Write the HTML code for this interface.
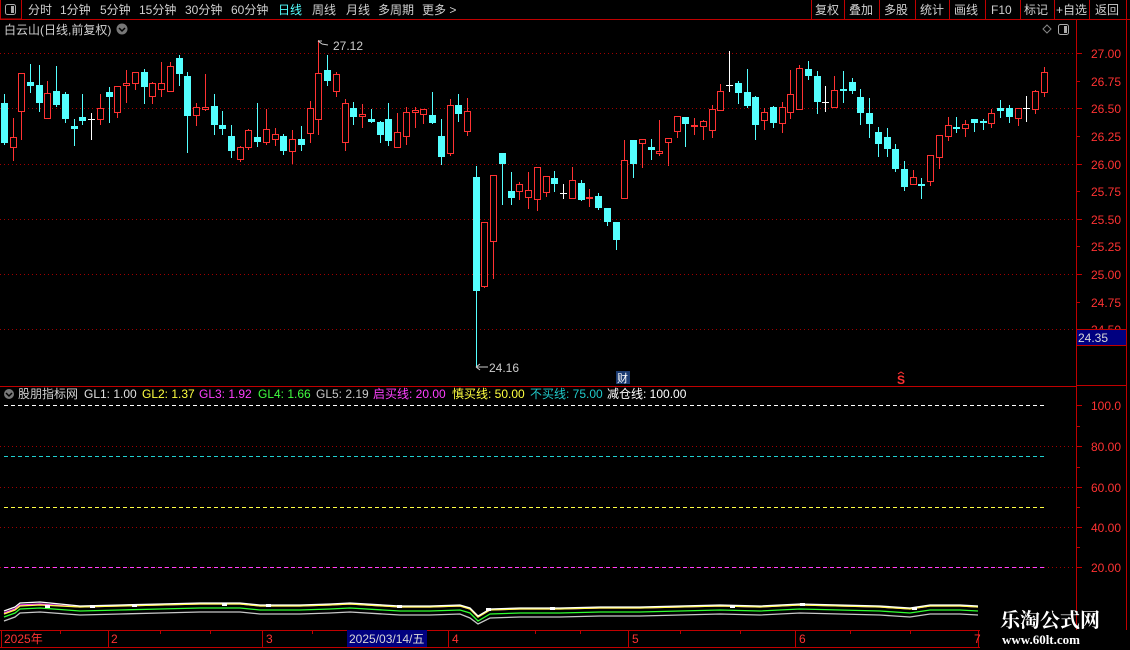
<!DOCTYPE html>
<html><head><meta charset="utf-8"><style>
body{margin:0;background:#000;width:1130px;height:650px;overflow:hidden;font-family:"Liberation Sans","Noto Sans CJK SC",sans-serif;}
svg{position:absolute;left:0;top:0}
</style></head><body>
<svg width="1130" height="650" xmlns="http://www.w3.org/2000/svg" font-family="Liberation Sans, Noto Sans CJK SC, sans-serif">
<rect width="1130" height="650" fill="#000"/>
<!-- toolbar -->
<line x1="0" y1="19.5" x2="1130" y2="19.5" stroke="#c00000"/>
<rect x="0.5" y="-1" width="21" height="20" fill="none" stroke="#c00000"/>
<rect x="5.5" y="4.5" width="10" height="10" rx="2" fill="none" stroke="#aaa"/><rect x="11" y="6" width="3" height="7" fill="#aaa"/>
<g font-size="12" fill="#d0d0d0">
<text x="28" y="14">分时</text><text x="60" y="14">1分钟</text><text x="100" y="14">5分钟</text><text x="139" y="14">15分钟</text><text x="185" y="14">30分钟</text><text x="231" y="14">60分钟</text>
<text x="278" y="14" fill="#54ffff">日线</text><text x="312" y="14">周线</text><text x="346" y="14">月线</text><text x="378" y="14">多周期</text><text x="422" y="14">更多 &gt;</text>
</g>
<g stroke="#c00000" fill="none">
<line x1="811.5" y1="0" x2="811.5" y2="19"/><line x1="844.5" y1="0" x2="844.5" y2="19"/><line x1="879.5" y1="0" x2="879.5" y2="19"/><line x1="915.5" y1="0" x2="915.5" y2="19"/><line x1="949.5" y1="0" x2="949.5" y2="19"/><line x1="985.5" y1="0" x2="985.5" y2="19"/><line x1="1020.5" y1="0" x2="1020.5" y2="19"/><line x1="1054.5" y1="0" x2="1054.5" y2="19"/><line x1="1089.5" y1="0" x2="1089.5" y2="19"/><line x1="1126.5" y1="0" x2="1126.5" y2="19"/>
</g>
<g font-size="12" fill="#d0d0d0">
<text x="815" y="14">复权</text><text x="849" y="14">叠加</text><text x="884" y="14">多股</text><text x="920" y="14">统计</text><text x="954" y="14">画线</text><text x="991" y="14">F10</text><text x="1024" y="14">标记</text><text x="1056" y="14">+自选</text><text x="1095" y="14">返回</text>
</g>
<!-- title -->
<text x="4" y="34" font-size="12" fill="#d0d0d0">白云山(日线,前复权)</text>
<circle cx="122" cy="29" r="5.5" fill="#777"/><path d="M119 28l3 3 3-3" stroke="#000" stroke-width="1.5" fill="none"/>
<path d="M1047 25l4 4-4 4-4-4z" fill="none" stroke="#888"/>
<rect x="1058.5" y="24.5" width="10" height="10" rx="2" fill="none" stroke="#aaa"/><rect x="1064" y="26" width="3" height="7" fill="#aaa"/>
<!-- axes -->
<line x1="1076.5" y1="19" x2="1076.5" y2="630" stroke="#c00000"/>
<line x1="1126.5" y1="19" x2="1126.5" y2="630" stroke="#c00000"/>
<line x1="0" y1="386.5" x2="1076" y2="386.5" stroke="#c00000"/>
<line x1="1076" y1="385.5" x2="1126" y2="385.5" stroke="#c00000"/>
<g stroke="#a00000" stroke-dasharray="1,3">
<line x1="0" y1="53.5" x2="1076" y2="53.5"/><line x1="0" y1="108.5" x2="1076" y2="108.5"/><line x1="0" y1="164.5" x2="1076" y2="164.5"/><line x1="0" y1="219.5" x2="1076" y2="219.5"/><line x1="0" y1="274.5" x2="1076" y2="274.5"/><line x1="0" y1="329.5" x2="1076" y2="329.5"/>
<line x1="0" y1="446.5" x2="1076" y2="446.5"/><line x1="0" y1="487.5" x2="1076" y2="487.5"/><line x1="0" y1="527.5" x2="1076" y2="527.5"/><line x1="0" y1="567.5" x2="1076" y2="567.5"/>
</g>
<g stroke="#c00000">
<line x1="1076" y1="53.5" x2="1082" y2="53.5"/><line x1="1076" y1="81.5" x2="1080" y2="81.5"/><line x1="1076" y1="108.5" x2="1082" y2="108.5"/><line x1="1076" y1="136.5" x2="1080" y2="136.5"/><line x1="1076" y1="164.5" x2="1082" y2="164.5"/><line x1="1076" y1="191.5" x2="1080" y2="191.5"/><line x1="1076" y1="219.5" x2="1082" y2="219.5"/><line x1="1076" y1="246.5" x2="1080" y2="246.5"/><line x1="1076" y1="274.5" x2="1082" y2="274.5"/><line x1="1076" y1="302.5" x2="1080" y2="302.5"/><line x1="1076" y1="329.5" x2="1082" y2="329.5"/>
<line x1="1076" y1="405.5" x2="1082" y2="405.5"/><line x1="1076" y1="426.5" x2="1080" y2="426.5"/><line x1="1076" y1="446.5" x2="1082" y2="446.5"/><line x1="1076" y1="467.5" x2="1080" y2="467.5"/><line x1="1076" y1="487.5" x2="1082" y2="487.5"/><line x1="1076" y1="507.5" x2="1080" y2="507.5"/><line x1="1076" y1="527.5" x2="1082" y2="527.5"/><line x1="1076" y1="547.5" x2="1080" y2="547.5"/><line x1="1076" y1="567.5" x2="1082" y2="567.5"/>
</g>
<g font-size="12" fill="#ff3232">
<text x="1091" y="58">27.00</text><text x="1091" y="86">26.75</text><text x="1091" y="113">26.50</text><text x="1091" y="141">26.25</text><text x="1091" y="169">26.00</text><text x="1091" y="196">25.75</text><text x="1091" y="224">25.50</text><text x="1091" y="251">25.25</text><text x="1091" y="279">25.00</text><text x="1091" y="307">24.75</text><text x="1091" y="334">24.50</text>
<text x="1091" y="410">100.0</text><text x="1091" y="451">80.00</text><text x="1091" y="492">60.00</text><text x="1091" y="532">40.00</text><text x="1091" y="572">20.00</text>
</g>
<rect x="1076.5" y="329.5" width="50" height="16" fill="#000080" stroke="#c00000"/>
<text x="1078" y="342" font-size="12" fill="#d8d8d8">24.35</text>
<!-- candles: red -->
<g stroke="#ff3232" fill="#000">
<path d="M13.5 118V161M21.5 73V140M47.5 81V119M100.5 94V125M117.5 86V118M126.5 70V103M135.5 72V90M152.5 82V104M161.5 62V97M170.5 62V91M196.5 103V126M205.5 74V111M240.5 146V162M248.5 129V150M266.5 109V145M275.5 128V146M292.5 130V164M310.5 101V143M318.5 40V135M336.5 72V97M345.5 99V151M362.5 104V128M397.5 113V147M406.5 107V145M415.5 107V128M423.5 109V124M450.5 99V156M467.5 98V136M484.5 222V288M493.5 175V279M519.5 182V200M528.5 172V209M537.5 167V211M546.5 176V197M572.5 167V199M589.5 189V207M624.5 140V198M642.5 139V168M659.5 120V156M668.5 138V166M677.5 116V138M694.5 118V135M703.5 120V140M712.5 105V138M720.5 84V110M764.5 108V130M782.5 102V133M790.5 70V119M799.5 65V109M834.5 76V107M913.5 170V184M930.5 155V186M939.5 135V169M948.5 117V141M965.5 120V137M991.5 109V128M1018.5 108V126M1035.5 90V114M1044.5 67V97"/>
<rect x="10.5" y="137.5" width="6" height="10"/><rect x="18.5" y="73.5" width="6" height="38"/><rect x="44.5" y="93.5" width="6" height="25"/><rect x="97.5" y="108.5" width="6" height="11"/><rect x="114.5" y="86.5" width="6" height="26"/><rect x="123.5" y="83.5" width="6" height="2"/><rect x="132.5" y="72.5" width="6" height="11"/><rect x="149.5" y="83.5" width="6" height="13"/><rect x="158.5" y="83.5" width="6" height="6"/><rect x="167.5" y="66.5" width="6" height="25"/><rect x="193.5" y="107.5" width="6" height="8"/><rect x="202.5" y="107.5" width="6" height="2"/><rect x="237.5" y="147.5" width="6" height="12"/><rect x="245.5" y="130.5" width="6" height="17"/><rect x="263.5" y="129.5" width="6" height="13"/><rect x="272.5" y="134.5" width="6" height="5"/><rect x="289.5" y="139.5" width="6" height="12"/><rect x="307.5" y="108.5" width="6" height="25"/><rect x="315.5" y="73.5" width="6" height="46"/><rect x="333.5" y="74.5" width="6" height="17"/><rect x="342.5" y="103.5" width="6" height="39"/><rect x="359.5" y="114.5" width="6" height="2"/><rect x="394.5" y="132.5" width="6" height="15"/><rect x="403.5" y="112.5" width="6" height="24"/><rect x="412.5" y="110.5" width="6" height="2"/><rect x="420.5" y="109.5" width="6" height="5"/><rect x="447.5" y="105.5" width="6" height="48"/><rect x="464.5" y="111.5" width="6" height="20"/><rect x="481.5" y="222.5" width="6" height="64"/><rect x="490.5" y="175.5" width="6" height="66"/><rect x="516.5" y="184.5" width="6" height="7"/><rect x="525.5" y="190.5" width="6" height="7"/><rect x="534.5" y="167.5" width="6" height="32"/><rect x="543.5" y="176.5" width="6" height="16"/><rect x="569.5" y="180.5" width="6" height="18"/><rect x="586.5" y="197.5" width="6" height="1"/><rect x="621.5" y="160.5" width="6" height="38"/><rect x="639.5" y="139.5" width="6" height="4"/><rect x="656.5" y="151.5" width="6" height="2"/><rect x="665.5" y="138.5" width="6" height="4"/><rect x="674.5" y="116.5" width="6" height="15"/><rect x="691.5" y="125.5" width="6" height="1"/><rect x="700.5" y="121.5" width="6" height="5"/><rect x="709.5" y="109.5" width="6" height="21"/><rect x="717.5" y="91.5" width="6" height="19"/><rect x="761.5" y="112.5" width="6" height="8"/><rect x="779.5" y="107.5" width="6" height="16"/><rect x="787.5" y="94.5" width="6" height="18"/><rect x="796.5" y="68.5" width="6" height="41"/><rect x="831.5" y="90.5" width="6" height="17"/><rect x="910.5" y="177.5" width="6" height="7"/><rect x="927.5" y="155.5" width="6" height="26"/><rect x="936.5" y="135.5" width="6" height="22"/><rect x="945.5" y="125.5" width="6" height="11"/><rect x="962.5" y="124.5" width="6" height="4"/><rect x="988.5" y="113.5" width="6" height="10"/><rect x="1015.5" y="108.5" width="6" height="10"/><rect x="1032.5" y="91.5" width="6" height="18"/><rect x="1041.5" y="72.5" width="6" height="20"/>
</g>
<!-- cyan -->
<g stroke="#54ffff" fill="#54ffff">
<path d="M4.5 94V145M30.5 64V93M39.5 65V112M56.5 66V107M65.5 92V123M74.5 119V146M82.5 94V125M109.5 87V123M144.5 69V104M179.5 55V86M187.5 72V153M214.5 94V135M222.5 111V135M231.5 125V158M257.5 103V147M283.5 134V155M301.5 126V151M327.5 55V86M353.5 102V125M371.5 109V123M380.5 121V143M388.5 103V146M432.5 92V124M441.5 119V165M458.5 94V122M476.5 166V367M502.5 153V205M511.5 172V205M554.5 171V192M581.5 180V201M598.5 193V210M607.5 208V226M616.5 222V250M633.5 140V178M651.5 139V160M685.5 117V147M738.5 81V104M747.5 69V108M755.5 96V140M773.5 106V128M808.5 61V80M817.5 71V114M843.5 71V103M852.5 78V94M860.5 89V125M869.5 98V138M878.5 127V157M887.5 128V157M895.5 144V172M904.5 161V191M921.5 178V199M956.5 117V133M974.5 119V132M983.5 119V130M1000.5 100V118M1009.5 105V123"/>
<g stroke="none">
<rect x="1" y="103" width="7" height="40"/><rect x="27" y="82" width="7" height="4"/><rect x="36" y="85" width="7" height="18"/><rect x="53" y="91" width="7" height="14"/><rect x="62" y="94" width="7" height="25"/><rect x="71" y="126" width="7" height="3"/><rect x="79" y="117" width="7" height="4"/><rect x="106" y="92" width="7" height="5"/><rect x="141" y="72" width="7" height="15"/><rect x="176" y="58" width="7" height="16"/><rect x="184" y="76" width="7" height="40"/><rect x="211" y="106" width="7" height="19"/><rect x="219" y="125" width="7" height="4"/><rect x="228" y="136" width="7" height="15"/><rect x="254" y="137" width="7" height="5"/><rect x="280" y="136" width="7" height="15"/><rect x="298" y="139" width="7" height="6"/><rect x="324" y="70" width="7" height="11"/><rect x="350" y="108" width="7" height="9"/><rect x="368" y="119" width="7" height="3"/><rect x="377" y="122" width="7" height="13"/><rect x="385" y="119" width="7" height="22"/><rect x="429" y="115" width="7" height="8"/><rect x="438" y="136" width="7" height="21"/><rect x="455" y="105" width="7" height="9"/><rect x="473" y="177" width="7" height="114"/><rect x="499" y="153" width="7" height="11"/><rect x="508" y="191" width="7" height="7"/><rect x="551" y="178" width="7" height="6"/><rect x="578" y="183" width="7" height="17"/><rect x="595" y="196" width="7" height="12"/><rect x="604" y="208" width="7" height="14"/><rect x="613" y="222" width="7" height="18"/><rect x="630" y="140" width="7" height="24"/><rect x="648" y="147" width="7" height="3"/><rect x="682" y="117" width="7" height="7"/><rect x="735" y="83" width="7" height="10"/><rect x="744" y="92" width="7" height="14"/><rect x="752" y="97" width="7" height="28"/><rect x="770" y="107" width="7" height="16"/><rect x="805" y="69" width="7" height="7"/><rect x="814" y="76" width="7" height="26"/><rect x="840" y="89" width="7" height="2"/><rect x="849" y="82" width="7" height="9"/><rect x="857" y="97" width="7" height="16"/><rect x="866" y="113" width="7" height="11"/><rect x="875" y="132" width="7" height="12"/><rect x="884" y="137" width="7" height="12"/><rect x="892" y="149" width="7" height="20"/><rect x="901" y="169" width="7" height="18"/><rect x="918" y="184" width="7" height="2"/><rect x="953" y="127" width="7" height="2"/><rect x="971" y="119" width="7" height="4"/><rect x="980" y="121" width="7" height="2"/><rect x="997" y="108" width="7" height="3"/><rect x="1006" y="108" width="7" height="9"/>
</g></g>
<!-- white crosses -->
<g stroke="#fff">
<path d="M91.5 113V140M88 119.5H95M563.5 184V199M560 193.5H567M729.5 51V92M726 85.5H733M825.5 86V112M822 102.5H829M1026.5 96V122M1023 108.5H1030"/>
</g>
<!-- labels -->
<path d="M318 41l4 3M318 41h4" stroke="#ccc" fill="none"/><path d="M322 44l6 1" stroke="#ccc"/>
<text x="333" y="50" font-size="12" fill="#ccc">27.12</text>
<path d="M476 367h12M476 367l4-3M476 367l4 3" stroke="#ccc" fill="none"/>
<text x="489" y="372" font-size="12" fill="#ccc">24.16</text>
<rect x="616" y="371" width="14" height="13" fill="#1a3a70"/><text x="617" y="382" font-size="11" fill="#fff">财</text>
<text x="897" y="384" font-size="12" fill="#ff3232" font-weight="bold">S</text><path d="M898 374l3-2 3 2" stroke="#ff3232" fill="none"/>
<!-- lower panel -->
<circle cx="9" cy="394" r="5" fill="#777"/><path d="M6 393l3 3 3-3" stroke="#000" stroke-width="1.5" fill="none"/>
<g font-size="12">
<text x="18" y="398" fill="#d0d0d0">股朋指标网</text>
<text x="84" y="398" fill="#e0e0e0">GL1: 1.00</text>
<text x="142" y="398" fill="#ffff40">GL2: 1.37</text>
<text x="199" y="398" fill="#ff40ff">GL3: 1.92</text>
<text x="258" y="398" fill="#40ff40">GL4: 1.66</text>
<text x="316" y="398" fill="#c8c8c8">GL5: 2.19</text>
<text x="373" y="398" fill="#ff40ff">启买线: 20.00</text>
<text x="452" y="398" fill="#ffff40">慎买线: 50.00</text>
<text x="530" y="398" fill="#20c8c8">不买线: 75.00</text>
<text x="607" y="398" fill="#fff">减仓线: 100.00</text>
</g>
<g stroke-dasharray="4,3">
<line x1="4" y1="405.5" x2="1045" y2="405.5" stroke="#fff"/>
<line x1="4" y1="456.5" x2="1045" y2="456.5" stroke="#20d0d0"/>
<line x1="4" y1="507.5" x2="1045" y2="507.5" stroke="#ffff40"/>
<line x1="4" y1="567.5" x2="1045" y2="567.5" stroke="#ff40ff"/>
</g>
<g fill="none" stroke-width="1.3">
<polyline stroke="#c8c8c8" points="4,621 15,617 20,613 40,612 80,615 120,614 160,613 200,612 240,612 260,614 300,614 330,613 350,612 400,615 430,615 460,614 470,618 478,624 490,618 520,617 560,617 600,616 640,616 680,615 720,614 760,615 800,613 840,614 880,615 910,617 930,614 960,614 978,615"/>
<polyline stroke="#30ff30" points="4,617 15,613 20,609 40,608 80,611 120,610 160,609 200,608 240,608 260,610 300,610 330,609 350,608 400,611 430,611 460,610 470,613 478,621 490,614 520,613 560,613 600,612 640,612 680,611 720,610 760,611 800,609 840,610 880,611 910,613 930,610 960,610 978,611"/>
<polyline stroke="#ff40ff" points="4,613 15,609 20,605 40,604 80,607 120,606 160,605 200,604 240,604 260,606 300,606 330,605 350,604 400,607 430,607 460,606 470,609 478,617 490,610 520,609 560,609 600,608 640,608 680,607 720,606 760,607 800,605 840,606 880,607 910,609 930,606 960,606 978,607"/>
<polyline stroke="#ffff40" points="4,614 15,610 20,606 40,605 80,607 120,606 160,605 200,604 240,604 260,606 300,606 330,605 350,604 400,607 430,607 460,606 470,609 478,617 490,610 520,609 560,609 600,608 640,608 680,607 720,606 760,607 800,605 840,606 880,607 910,609 930,606 960,606 978,607"/>
<polyline stroke="#fff" points="4,611 15,607 20,603 40,602 80,606 120,605 160,604 200,603 240,603 260,605 300,605 330,604 350,603 400,606 430,606 460,605 470,608 478,616 490,609 520,608 560,608 600,607 640,607 680,606 720,605 760,606 800,604 840,605 880,606 910,608 930,605 960,605 978,606"/>
</g>
<g fill="#fff"><rect x="45" y="605" width="5" height="3"/><rect x="90" y="605" width="5" height="3"/><rect x="132" y="604" width="5" height="3"/><rect x="222" y="603" width="5" height="3"/><rect x="266" y="604" width="5" height="3"/><rect x="397" y="605" width="5" height="3"/><rect x="486" y="608" width="5" height="3"/><rect x="550" y="607" width="5" height="3"/><rect x="730" y="605" width="5" height="3"/><rect x="800" y="603" width="5" height="3"/><rect x="912" y="607" width="5" height="3"/></g>
<!-- time axis -->
<line x1="0" y1="630.5" x2="980" y2="630.5" stroke="#c00000"/>
<line x1="0" y1="647.5" x2="980" y2="647.5" stroke="#c00000"/>
<g stroke="#c00000"><path d="M1.5 630V648M108.5 630V648M262.5 630V648M448.5 630V648M628.5 630V648M795.5 630V648M978.5 630V648M60.5 630V634M160.5 630V634M210.5 630V634M312.5 630V634M385.5 630V634M535.5 630V634M580.5 630V634M680.5 630V634M740.5 630V634M850.5 630V634M910.5 630V634"/></g>
<g font-size="12" fill="#ff3232">
<text x="4" y="643">2025年</text><text x="111" y="643">2</text><text x="266" y="643">3</text><text x="452" y="643">4</text><text x="632" y="643">5</text><text x="799" y="643">6</text><text x="974" y="643">7</text>
</g>
<rect x="347" y="630" width="80" height="17" fill="#000080"/>
<text x="349" y="643" font-size="12" fill="#d8d8d8">2025/03/14/五</text>
<!-- watermark -->
<text x="1000" y="627" font-size="20" font-weight="bold" fill="#fff" font-family="Noto Serif CJK SC, serif">乐淘公式网</text>
<text x="1002" y="644" font-size="13" font-weight="bold" fill="#fff" font-family="Liberation Serif, serif">www.60lt.com</text>
</svg>
</body></html>
